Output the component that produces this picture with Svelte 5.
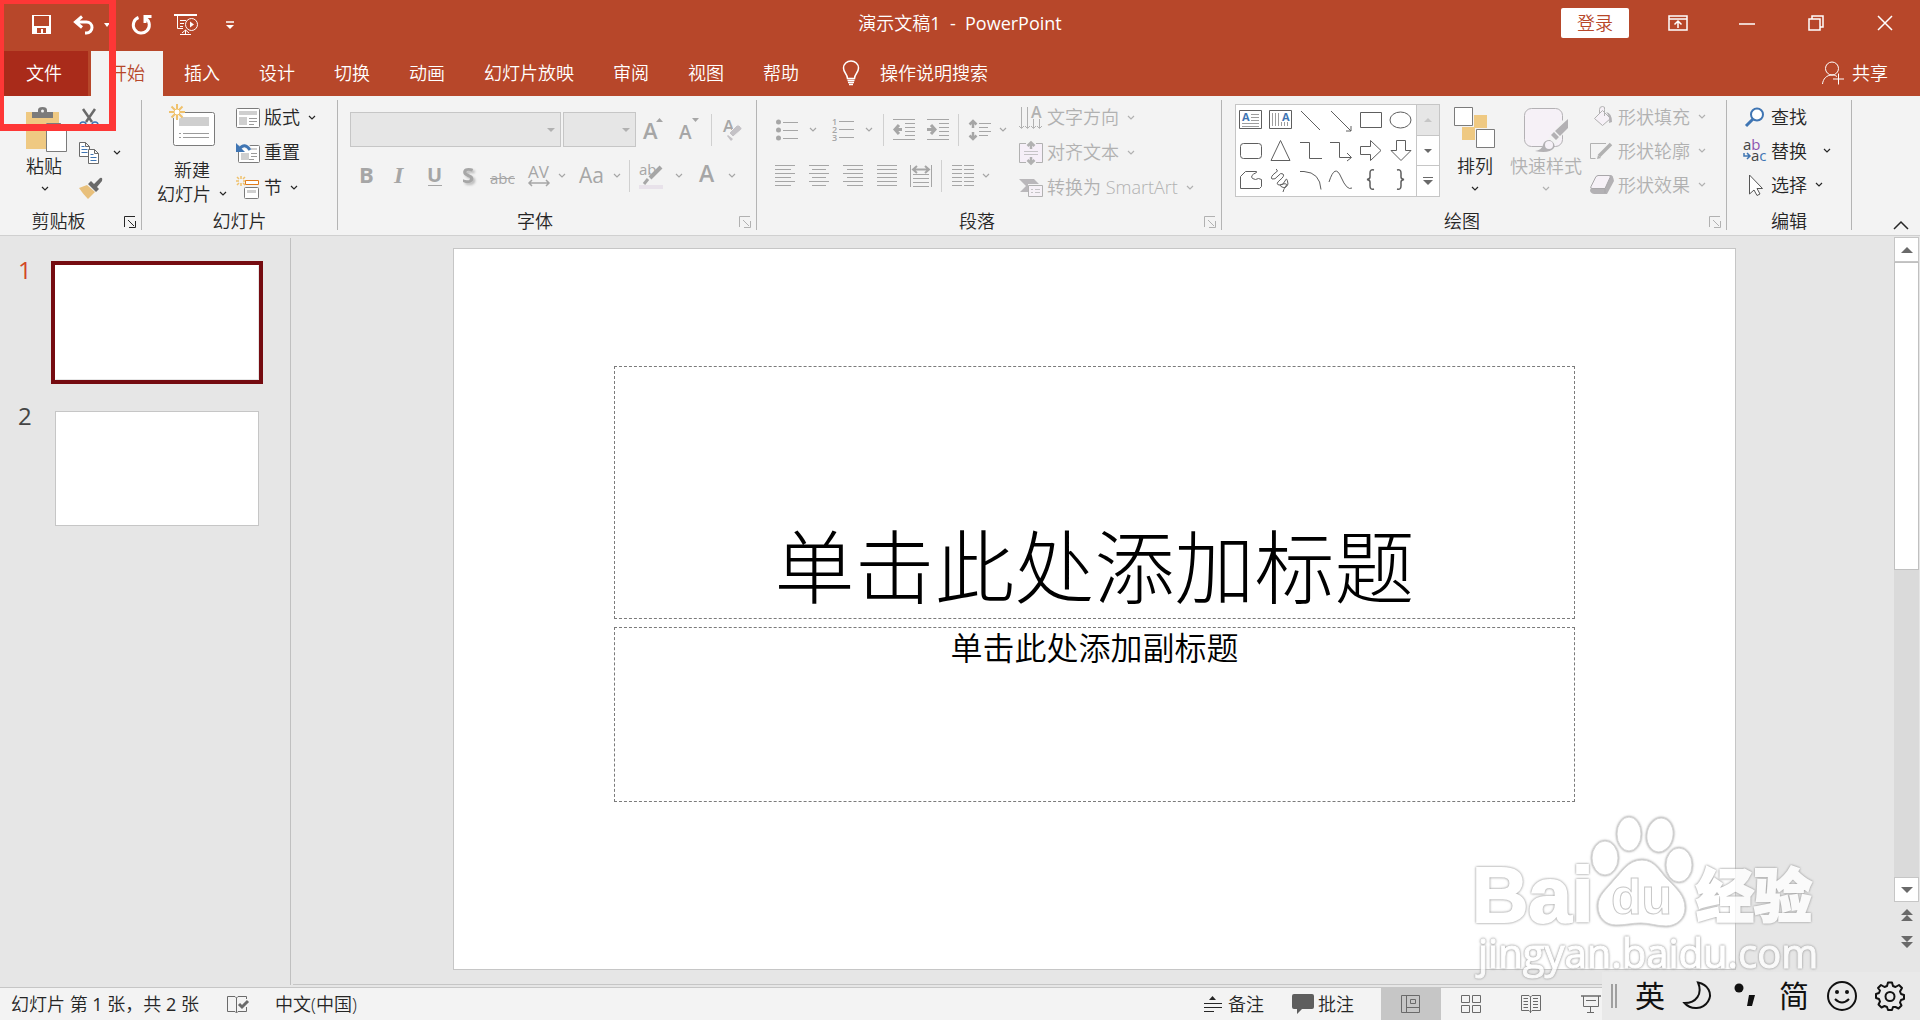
<script>
	const tabs = ['插入', '设计', '切换', '动画', '幻灯片放映', '审阅', '视图', '帮助'];

	// name: [width, height, markup]
	const icons = {
		save: [19, 19, '<path fill="currentColor" stroke="none" fill-rule="evenodd" d="M0 0h19v19H0zM2 1h15v10H2zM5 13h9v5h-3v-4H9v4H5z"/>'],
		undo: [22, 20, '<path stroke-width="3" d="M9 1.5L2.5 7 9 12.5M3 7h10.5a5.5 5.5 0 0 1 0 11H12"/>'],
		redo: [20, 21, '<path stroke-width="3" d="M6.5 3.5A8 8 0 1 0 14 4.5M19.5 2.5H13V9"/>'],
		show: [24, 21, '<path stroke-width="2" d="M0 1h23"/><path d="M3.5 2v12.5H9M6 6.5h6M6 9.5h4M6 12.5h3M6 20.5h11M11.5 16v4M8 19l3.5-3 3.5 3"/><circle cx="17.5" cy="10.5" r="6"/><path fill="currentColor" stroke="none" d="M16 7.5l4 3-4 3z"/>'],
		more: [8, 8, '<path stroke-width="1.5" d="M0 1h8"/><path fill="currentColor" stroke="none" d="M0 4h8L4 8z"/>'],
		caret: [6, 4, '<path fill="currentColor" stroke="none" d="M0 0h6L3 4z"/>'],
		bulb: [18, 26, '<path stroke-width="1.5" d="M5.5 18.5C5.5 14 1.5 13 1.5 8a7.5 7 0 0 1 15 0c0 5-4 6-4 10.5zM5.5 20.5h7M6 22.5h6M7 24.5h4"/>'],
		ribbonMode: [20, 16, '<path stroke-width="1.5" d="M1 1h18v14H1zM1 4h18M10 13V6M6.5 9.5L10 6l3.5 3.5"/>'],
		minimize: [16, 16, '<path stroke-width="1.5" d="M0 9h16"/>'],
		restore: [16, 16, '<path stroke-width="1.5" d="M1 4h11v11H1zM4 4V1h11v11h-3"/>'],
		close: [16, 16, '<path stroke-width="1.5" d="M1 1l14 14M15 1L1 15"/>'],
		share: [22, 24, '<circle cx="10" cy="7.5" r="6.5"/><path d="M.5 23c.5-5 4-9 9.5-9 2 0 3.5.5 5 1.5M16.5 12.5v11M11 18h11"/>'],
		chevron: [8, 6, '<path stroke-width="1.2" d="M1 1l3 3 3-3"/>'],
		launcher: [12, 12, '<path d="M.5 11V.5H11M4 4l6 6M11.5 5v6.5H5"/>'],
		paste: [42, 46, '<path fill="#efc982" stroke="none" d="M0 5h33v11H20v26H0z"/><path fill="#7b7b7b" stroke="none" d="M6 5h6V3q0-3 4.5-3T21 3v2h6v6H6z"/><circle cx="16.5" cy="4" r="1.5" fill="#f3f3f3" stroke="none"/><path fill="#fff" stroke="#7b7b7b" d="M20.5 16.5h14l6 6v22h-20zM34.5 16.5v6h6"/>'],
		cut: [20, 20, '<path stroke="#6a6a6a" stroke-width="2.5" d="M4 1l9 13M16 1L7 14"/><circle cx="4" cy="17" r="3" stroke="#3f75b3" stroke-width="1.5"/><circle cx="16" cy="17" r="3" stroke="#3f75b3" stroke-width="1.5"/>'],
		copy: [20, 22, '<path fill="#fff" stroke="#6a6a6a" d="M.5.5h6l4 4v10H.5zM6.5.5v4h4"/><path stroke="#3f75b3" d="M2.5 4.5h3M2.5 7.5h6M2.5 10.5h6"/><path fill="#fff" stroke="#6a6a6a" d="M9.5 7.5h6l4 4v10h-10zM15.5 7.5v4h4"/><path stroke="#3f75b3" d="M11.5 12.5h3M11.5 15.5h6M11.5 18.5h6"/>'],
		brush: [24, 22, '<path fill="#e8c07c" stroke="none" d="M0 11l8-3 8 7-7 7q-5-5-9-11z"/><path fill="#6a6a6a" stroke="none" d="M9 7l3-3 8 8-3 3zM15 7l6-6q3-1 2 3l-5 6z"/>'],
		newSlide: [47, 42, '<rect x="4.5" y="8.5" width="41" height="33" rx="2" fill="#fff" stroke="#7b7b7b"/><path fill="#cfcfcf" stroke="none" d="M10 13h30v9H10z"/><path stroke="#9b9b9b" d="M10 29.5h2M14 29.5h26M10 33.5h2M14 33.5h26"/><circle cx="8" cy="8" r="7" fill="#f3f3f3" stroke="none"/><path stroke="#efc16c" stroke-width="2" d="M8 0v5M8 11v5M0 8h5M11 8h5M2.5 2.5L6 6M10 10l3.5 3.5M13.5 2.5L10 6M6 10l-3.5 3.5"/><circle cx="8" cy="8" r="3" fill="#fff" stroke="#efc16c"/>'],
		layout: [24, 20, '<rect x=".5" y=".5" width="23" height="19" rx="1" fill="#fff" stroke="#7b7b7b"/><path fill="#cfcfcf" stroke="none" d="M3 3h18v4H3zM3 9h8v8H3z"/><path stroke="#9b9b9b" d="M13 10.5h8M13 13.5h8M13 16.5h5"/>'],
		reset: [24, 20, '<rect x="2.5" y="2.5" width="21" height="17" rx="1" fill="#fff" stroke="#7b7b7b"/><path fill="#cfcfcf" stroke="none" d="M5 10h8v7H5zM15 5h6v2h-6z"/><path stroke="#9b9b9b" d="M15 10.5h6M15 13.5h6M13 16.5h5"/><path stroke="#f3f3f3" stroke-width="5" d="M3 6q5-6 11 0"/><path stroke="#3f75b3" stroke-width="3" d="M3 6q6-7 11 1"/><path fill="#3f75b3" stroke="none" d="M0 0v9h9z"/>'],
		section: [24, 24, '<path stroke="#efc16c" stroke-width="1.5" d="M5 0v3M5 7v3M0 5h3M7 5h3M1 1l2 2M7 7l2 2M9 1L7 3M3 7L1 9"/><path fill="#fff" stroke="#e07c1c" d="M9.5 4.5h13v4h-13z"/><rect x="8.5" y="11.5" width="14" height="11" rx="1" fill="#fff" stroke="#7b7b7b"/><path fill="#cfcfcf" stroke="none" d="M11 14h9v3h-9z"/>'],
		grow: [22, 24, '<text x="0" y="21" font-size="22" font-weight="600">A</text><path fill="currentColor" stroke="none" d="M13 4h7l-3.5-4z"/>'],
		shrink: [22, 24, '<text x="0" y="21" font-size="19" font-weight="600">A</text><path fill="currentColor" stroke="none" d="M13 0h7l-3.5 4z"/>'],
		clear: [20, 24, '<text x="0" y="14" font-size="17" font-weight="600">A</text><path fill="#c4c2c6" stroke="#f3f3f3" d="M6 15l8-8q2-1 4 2 2 2 0 3l-8 7z"/><path fill="#c4c2c6" stroke="none" d="M4 18l1-1 5 4-2 2z"/>'],
		bold: [18, 24, '<text x="1" y="19" font-size="22" font-weight="700">B</text>'],
		italic: [18, 24, '<text x="2" y="19" font-size="24" font-weight="700" font-style="italic" font-family="Liberation Serif">I</text>'],
		underline: [18, 24, '<text x="1" y="18" font-size="20" font-weight="700">U</text><path d="M2 21.5h14"/>'],
		shadow: [18, 24, '<text x="2" y="19" font-size="22" font-weight="700" style="filter:drop-shadow(2px 2px 1px #bbb)">S</text>'],
		strike: [26, 24, '<text x="0" y="20" font-size="15">abc</text><path d="M0 14.5h25"/>'],
		spacing: [22, 24, '<text x="0" y="14" font-size="17">AV</text><path stroke-width="1.5" d="M1 19h20M4 16l-3 3 3 3M18 16l3 3-3 3"/>'],
		letterCase: [26, 24, '<text x="0" y="19" font-size="21">Aa</text>'],
		highlight: [24, 26, '<text x="0" y="12" font-size="15">ab</text><path stroke-width="4" d="M22 4L11 15"/><path stroke-width="3" d="M9 16l-4 5"/><path fill="#e8e2ea" stroke="none" d="M0 22h24v4H0z"/>'],
		fontColor: [18, 26, '<text x="1" y="19" font-size="23" font-weight="600">A</text>'],
		bullets: [22, 22, '<g fill="currentColor" stroke="none"><circle cx="2.5" cy="3" r="2.5"/><circle cx="2.5" cy="11" r="2.5"/><circle cx="2.5" cy="19" r="2.5"/></g><path d="M7 3.5h15M7 11.5h15M7 19.5h15"/>'],
		numbering: [22, 24, '<g font-size="9" font-weight="600"><text x="0" y="7">1</text><text x="0" y="15">2</text><text x="0" y="23">3</text></g><path d="M7 3.5h15M7 11.5h15M7 19.5h15"/>'],
		outdent: [22, 22, '<path d="M0 .5h22M12 4.5h10M12 8.5h10M12 12.5h10M12 16.5h10M0 20.5h22"/><path stroke-width="3" d="M9 10.5H3M6 6l-4 4.5L6 15"/>'],
		indent: [22, 22, '<path d="M0 .5h22M12 4.5h10M12 8.5h10M12 12.5h10M12 16.5h10M0 20.5h22"/><path stroke-width="3" d="M0 10.5h7M4 6l4 4.5L4 15"/>'],
		lineSpacing: [22, 22, '<path d="M10 4.5h12M10 8.5h9M10 12.5h12M10 16.5h9"/><path stroke-width="2.5" d="M4 2v7M4 13v7M.5 5.5L4 2l3.5 3.5M.5 16.5L4 20l3.5-3.5"/>'],
		alignLeft: [20, 22, '<path d="M0 .5h20M0 4.5h16M0 8.5h20M0 12.5h16M0 16.5h20M0 20.5h16"/>'],
		alignCenter: [20, 22, '<path d="M0 .5h20M3 4.5h14M0 8.5h20M3 12.5h14M0 16.5h20M3 20.5h14"/>'],
		alignRight: [20, 22, '<path d="M0 .5h20M4 4.5h16M0 8.5h20M4 12.5h16M0 16.5h20M4 20.5h16"/>'],
		justify: [20, 22, '<path d="M0 .5h20M0 4.5h20M0 8.5h20M0 12.5h20M0 16.5h20M0 20.5h20"/>'],
		distribute: [22, 22, '<path d="M.5 0v22M21.5 0v22M3 9.5h16M3 13.5h16M3 17.5h16M3 21.5h16"/><path stroke-width="2" d="M4 4.5h14M7 1L3 4.5 7 8M15 1l4 3.5L15 8"/>'],
		columns: [22, 22, '<path d="M0 .5h10M12 .5h10M0 4.5h10M12 4.5h10M0 8.5h10M12 8.5h10M0 12.5h10M12 12.5h10M0 16.5h10M12 16.5h10M0 20.5h10M12 20.5h10"/>'],
		direction: [24, 24, '<text x="12" y="12" font-size="16" font-weight="600">A</text><path d="M2.5 1v21M8.5 1v21M14.5 13v9M20.5 13v9M0 20l2.5 2.5L5 20M6 20l2.5 2.5L11 20M12 20l2.5 2.5L17 20M18 20l2.5 2.5L23 20"/>'],
		alignText: [24, 24, '<path fill="#f6eff8" stroke="none" d="M1 3h22v18H1z"/><path d="M7 2.5H.5v19H7M17 2.5h6.5v19H17"/><path stroke-width="2.5" d="M12 8V2M8.5 5L12 1.5 15.5 5M12 16v6M8.5 19l3.5 3.5 3.5-3.5"/><path d="M5 10.5h14M5 13.5h14" stroke-opacity=".7"/>'],
		smartArt: [24, 20, '<path fill="#b9b7ba" stroke="none" d="M0 1h15l5 5H9v8H1l6-6z"/><path fill="#f6f1f7" d="M9.5 7.5h14v11h-14z"/><path d="M12 11.5h2M16 11.5h5M12 14.5h2M16 14.5h5" stroke-opacity=".7"/>'],
		arrange: [42, 46, '<path fill="#efc982" stroke="none" d="M20 8h13v13H20zM8 20h13v13H8z"/><path fill="#fff" stroke="#7b7b7b" d="M.5.5h18v18H.5zM22.5 22.5h18v18h-18z"/>'],
		quick: [44, 46, '<rect x=".5" y="1.5" width="38" height="38" rx="7" fill="#f6f1f7" stroke="#b3b1b4"/><path stroke="#f3f3f3" stroke-width="9" d="M43 15L22 42"/><path fill="#b3b1b4" stroke="none" d="M44 12v9l-8 8-5-5zM30 25l5 5-3 3-5-5zM11 44q7-1 8-6t7-5q6 3 4 8-5 6-19 3z"/><circle cx="25" cy="38" r="4" fill="#f6f1f7" stroke="none"/>'],
		fill: [24, 22, '<path fill="#f6f1f7" d="M4.5 12.5l8-8 8 8-8 7zM9.5 7V3.5q0-3 3-3t2 3V10"/><path fill="#b3b1b4" stroke="none" d="M16 6q6 1 6 10l-3 1q1-7-3-11z"/>'],
		outline: [24, 18, '<path d="M16 1.5H.5v15h5"/><path stroke-width="3.5" d="M21 2L9 14"/><path fill="currentColor" stroke="none" d="M7 17l1-4 3 3z"/>'],
		effect: [24, 22, '<path fill="#b3b1b4" stroke="none" d="M8 1h13q2 0 3 6l-7 13H4q-4-1-4-4z"/><path fill="#f6f1f7" stroke="#a9a7aa" d="M8 1.5h11q2 0 1 2l-5 11H2q-2 0-1-2l5-10zM15 15v4"/>'],
		find: [22, 20, '<circle cx="13" cy="7.5" r="6" fill="#fff" stroke="#3f75b3" stroke-width="2"/><path stroke="#3f75b3" stroke-width="3" d="M9 12l-7 7"/>'],
		replace: [24, 24, '<g font-size="15"><text x="0" y="11" style="fill:#444">a<tspan fill="#8d55b0">b</tspan></text><text x="8" y="22" style="fill:#444">a<tspan fill="#3f75b3">c</tspan></text></g><path stroke="#3f75b3" stroke-width="1.5" d="M1 14v3h5M4 14l3 3-3 3"/>'],
		select: [22, 22, '<path fill="#fff" stroke="#555" d="M5.5 1v19l4.5-4 3 5.5 3-1.5-3-5.5h5.5z"/>'],
		collapse: [16, 9, '<path stroke-width="1.5" d="M1 8l7-7 7 7"/>'],
		prev: [12, 13, '<path fill="currentColor" stroke="none" d="M6 0l6 6H0zM6 6l6 6H0z"/>'],
		next: [12, 13, '<path fill="currentColor" stroke="none" d="M0 0h12L6 6zM0 6h12l-6 6z"/>'],
		up: [12, 6, '<path fill="currentColor" stroke="none" d="M6 0l6 6H0z"/>'],
		down: [12, 6, '<path fill="currentColor" stroke="none" d="M0 0h12L6 6z"/>'],
		smallUp: [8, 4, '<path fill="currentColor" stroke="none" d="M4 0l4 4H0z"/>'],
		smallDown: [8, 4, '<path fill="currentColor" stroke="none" d="M0 0h8L4 4z"/>'],
		expand: [10, 8, '<path d="M0 .5h10"/><path fill="currentColor" stroke="none" d="M0 3h10L5 8z"/>'],
		proof: [22, 19, '<path d="M9.5 17.5V3L8 1.5H.5v15H8l1.5 1.5L11 16.5h8.5V12M9.5 3L11 1.5h8.5V4"/><path stroke-width="3" d="M12 9l3 3 6-6"/>'],
		notes: [18, 18, '<path fill="currentColor" stroke="none" d="M5 5h7L8.5 1z"/><path d="M0 8.5h18M0 12.5h18M0 16.5h10"/>'],
		comment: [22, 20, '<path fill="#5e5e5e" stroke="none" d="M2 0h18q2 0 2 2v11q0 2-2 2H10l-5 5v-5H2q-2 0-2-2V2q0-2 2-2z"/>'],
		normal: [20, 18, '<path d="M.5.5h18v17H.5zM5.5.5v17M5.5 12.5h13M9.5 4.5h5v4h-5z"/>'],
		sorter: [20, 18, '<path d="M.5.5h8v7h-8zM11.5.5h8v7h-8zM.5 10.5h8v7h-8zM11.5 10.5h8v7h-8z"/>'],
		reading: [20, 18, '<path d="M8 .5H.5v15H8l1.5 1.5 1.5-1.5h8.5V.5H11L9.5 2zM9.5 2v16M2.5 3.5H7M2.5 6.5H7M2.5 9.5H7M2.5 12.5H7M12 3.5h5M12 6.5h5M12 9.5h5M12 12.5h5"/>'],
		slideshow: [20, 18, '<path stroke-width="1.5" d="M0 1h20"/><path d="M2.5 1v10.5h15V1M5 5.5h10M9.5 12v6M6 17.5h7"/>'],
		moon: [30, 30, '<path stroke-width="2" d="M15 1.5c10 2 15 11 10 19-5 8-17 9-23.5 1.5C13 22 20 13 15 1.5z"/>'],
		punct: [24, 30, '<circle cx="5" cy="7" r="4.5" fill="currentColor" stroke="none"/><path fill="currentColor" stroke="none" d="M15 14h6l-3 11h-5z"/>'],
		smile: [30, 30, '<circle cx="15" cy="15" r="14" stroke-width="2"/><path stroke-width="2" d="M8 18q7 7 14 0"/><circle cx="10" cy="11" r="2" fill="currentColor" stroke="none"/><circle cx="20" cy="11" r="2" fill="currentColor" stroke="none"/>'],
		gear: [30, 30, '<path stroke-width="2" stroke-linejoin="round" d="M12 5l1-3.5h4L18 5l2.5 1 3.5-2 3 3-2 3.5 1 2.5 3 1v4l-3 1-1 2.5 1.5 3-3 3-3-1.5L18 26l-1 3h-4l-1-3-2.5-1-3 1.5-3-3 1.5-3L4 18l-3-1v-4l3-1 1-2.5L3 7l3-3 3.5 2z"/><circle cx="15" cy="15.5" r="4.5" stroke-width="2"/>']
	};

	// cells of the shape gallery, row by row
	const shapes = [
		['文本框', '<path d="M.5 1.5h22v18H.5z"/><path stroke-opacity=".6" d="M12 5.5h8M12 8.5h8M12 11.5h8M3 14.5h17M3 17.5h17"/><text x="3" y="12" font-size="11" font-weight="700" style="fill:#3f75b3">A</text>'],
		['竖排文本框', '<path d="M.5 1.5h22v18H.5z"/><path stroke-opacity=".6" d="M3.5 4v13M6.5 4v13M9.5 4v13M12.5 13v4M15.5 13v4M18.5 13v4"/><text x="13" y="12" font-size="11" font-weight="700" style="fill:#3f75b3">A</text>'],
		['直线', '<path d="M2 2l19 19"/>'],
		['箭头', '<path d="M2 2l20 20M22 17v5h-5"/>'],
		['矩形', '<path d="M1.5 3.5h21v15h-21z"/>'],
		['椭圆', '<ellipse cx="11.5" cy="11" rx="10.5" ry="8"/>'],
		['圆角矩形', '<rect x="1.5" y="4.5" width="21" height="15" rx="3"/>'],
		['三角形', '<path d="M11.5 1.5L21 21.5H2z"/>'],
		['肘形连接符', '<path d="M1 3.5h9.5v16H23"/>'],
		['肘形箭头', '<path d="M1 3.5h9.5v15H22M18 14l4.5 4.5L18 22"/>'],
		['右箭头', '<path d="M1.5 7.5h10v-6L22 11.5l-10.5 10v-6h-10z"/>'],
		['下箭头', '<path d="M7.5 1.5h9v10H22l-10 10-10-10h5.5z"/>'],
		['任意多边形', '<path d="M1.5 19.5v-12l5-5h11v1q-7 3-4 6 3 2 6 0l3 1v7l-2 2z"/>'],
		['自由曲线', '<path d="M7 0q3 2-1 4-5 4-3 6 3 1 6-3t5-2-3 6-1 5 6-4 3 3q-2 5-6 3t1-3 3 2-2 3-1 3"/>'],
		['弧形', '<path d="M1 2.5h4q16 1 17 18"/>'],
		['曲线', '<path d="M0 13Q6-6 12 8t11 11"/>'],
		['左大括号', '<path stroke-width="1.5" d="M15 1q-4-1-4 3v4q0 2-3 2.5 3 .5 3 2.5v4q0 4 4 3"/>'],
		['右大括号', '<path stroke-width="1.5" d="M8 1q4-1 4 3v4q0 2 3 2.5-3 .5-3 2.5v4q0 4-4 3"/>']
	];

	let selected = $state(1);
</script>

{#snippet icon(name)}
	<svg
		width={icons[name][0]}
		height={icons[name][1]}
		viewBox="0 0 {icons[name][0]} {icons[name][1]}"
		fill="none"
		stroke="currentColor"
		aria-hidden="true">{@html icons[name][2]}</svg
	>
{/snippet}

{#snippet tool(name, label, drop = false)}
	<button class="tool" class:drop aria-label={label} disabled>
		{@render icon(name)}
		{#if drop}{@render icon('chevron')}{/if}
	</button>
{/snippet}

{#snippet row(name, label, drop = false, disabled = false)}
	<button class="row" {disabled}>
		<span class="row-icon">{@render icon(name)}</span>
		<span class="row-label">{label}</span>
		{#if drop}{@render icon('chevron')}{/if}
	</button>
{/snippet}

{#snippet footer(label, launcher = true, disabled = true)}
	<div class="group-footer">
		<span>{label}</span>
		{#if launcher}
			<button class="launcher" aria-label="{label}设置" {disabled}>{@render icon('launcher')}</button>
		{/if}
	</div>
{/snippet}

<div class="app">
	<header>
		<div class="titlebar">
			<div class="quick-access">
				<button aria-label="保存">{@render icon('save')}</button>
				<button aria-label="撤消">{@render icon('undo')}</button>
				<button class="undo-more" aria-label="撤消列表">{@render icon('caret')}</button>
				<button aria-label="重复">{@render icon('redo')}</button>
				<button aria-label="从头开始">{@render icon('show')}</button>
				<button class="customize" aria-label="自定义快速访问工具栏">{@render icon('more')}</button>
			</div>
			<div class="doc-title">演示文稿<span class="latin">1&nbsp; -&nbsp; PowerPoint</span></div>
			<div class="window-buttons">
				<button class="login">登录</button>
				<button class="win" aria-label="功能区显示选项">{@render icon('ribbonMode')}</button>
				<button class="win" aria-label="最小化">{@render icon('minimize')}</button>
				<button class="win" aria-label="还原">{@render icon('restore')}</button>
				<button class="win" aria-label="关闭">{@render icon('close')}</button>
			</div>
		</div>
		<nav class="tabs">
			<button class="file">文件</button>
			<button class="active">开始</button>
			{#each tabs as tab}
				<button>{tab}</button>
			{/each}
			<label class="tell-me">
				{@render icon('bulb')}
				<input type="text" placeholder="操作说明搜索" aria-label="操作说明搜索" />
			</label>
			<button class="share">{@render icon('share')}共享</button>
		</nav>
	</header>

	<div class="ribbon">
		<section class="group clipboard">
			<div class="group-body">
				<button class="big paste">
					{@render icon('paste')}
					<span>粘贴</span>
					{@render icon('chevron')}
				</button>
				<div class="stack icons-only">
					<button aria-label="剪切">{@render icon('cut')}</button>
					<button class="copy" aria-label="复制">{@render icon('copy')}{@render icon('chevron')}</button>
					<button aria-label="格式刷">{@render icon('brush')}</button>
				</div>
			</div>
			{@render footer('剪贴板', true, false)}
		</section>

		<section class="group slides">
			<div class="group-body">
				<button class="big new-slide">
					{@render icon('newSlide')}
					<span>新建</span>
					<span class="with-chevron">幻灯片{@render icon('chevron')}</span>
				</button>
				<div class="stack">
					{@render row('layout', '版式', true)}
					{@render row('reset', '重置')}
					{@render row('section', '节', true)}
				</div>
			</div>
			{@render footer('幻灯片', false)}
		</section>

		<section class="group font">
			<div class="group-body lines">
				<div class="line">
					<label class="combo family">
						<select aria-label="字体" disabled></select>
						{@render icon('smallDown')}
					</label>
					<label class="combo size">
						<select aria-label="字号" disabled></select>
						{@render icon('smallDown')}
					</label>
					{@render tool('grow', '增大字号')}
					{@render tool('shrink', '减小字号')}
					<span class="sep"></span>
					{@render tool('clear', '清除所有格式')}
				</div>
				<div class="line">
					{@render tool('bold', '加粗')}
					{@render tool('italic', '倾斜')}
					{@render tool('underline', '下划线')}
					{@render tool('shadow', '文字阴影')}
					{@render tool('strike', '删除线')}
					{@render tool('spacing', '字符间距', true)}
					{@render tool('letterCase', '更改大小写', true)}
					<span class="sep"></span>
					{@render tool('highlight', '文本突出显示颜色', true)}
					{@render tool('fontColor', '字体颜色', true)}
				</div>
			</div>
			{@render footer('字体')}
		</section>

		<section class="group paragraph">
			<div class="group-body">
				<div class="lines">
					<div class="line">
						{@render tool('bullets', '项目符号', true)}
						{@render tool('numbering', '编号', true)}
						<span class="sep"></span>
						{@render tool('outdent', '降低列表级别')}
						{@render tool('indent', '提高列表级别')}
						<span class="sep"></span>
						{@render tool('lineSpacing', '行距', true)}
					</div>
					<div class="line">
						{@render tool('alignLeft', '左对齐')}
						{@render tool('alignCenter', '居中')}
						{@render tool('alignRight', '右对齐')}
						{@render tool('justify', '两端对齐')}
						{@render tool('distribute', '分散对齐')}
						<span class="sep"></span>
						{@render tool('columns', '分栏', true)}
					</div>
				</div>
				<div class="stack">
					{@render row('direction', '文字方向', true, true)}
					{@render row('alignText', '对齐文本', true, true)}
					{@render row('smartArt', '转换为 SmartArt', true, true)}
				</div>
			</div>
			{@render footer('段落')}
		</section>

		<section class="group drawing">
			<div class="group-body">
				<div class="gallery">
					<div class="shapes">
						{#each shapes as [name, markup]}
							<button aria-label={name}>
								<svg width="24" height="23" viewBox="0 0 24 23" fill="none" stroke="currentColor" aria-hidden="true">{@html markup}</svg>
							</button>
						{/each}
					</div>
					<div class="gallery-nav">
						<button aria-label="向上" disabled>{@render icon('smallUp')}</button>
						<button aria-label="向下">{@render icon('smallDown')}</button>
						<button aria-label="其他">{@render icon('expand')}</button>
					</div>
				</div>
				<button class="big">
					{@render icon('arrange')}
					<span>排列</span>
					{@render icon('chevron')}
				</button>
				<button class="big" disabled>
					{@render icon('quick')}
					<span>快速样式</span>
					{@render icon('chevron')}
				</button>
				<div class="stack tight">
					{@render row('fill', '形状填充', true, true)}
					{@render row('outline', '形状轮廓', true, true)}
					{@render row('effect', '形状效果', true, true)}
				</div>
			</div>
			{@render footer('绘图')}
		</section>

		<section class="group editing">
			<div class="group-body">
				<div class="stack tight">
					{@render row('find', '查找')}
					{@render row('replace', '替换', true)}
					{@render row('select', '选择', true)}
				</div>
			</div>
			{@render footer('编辑', false)}
		</section>

		<button class="collapse" aria-label="折叠功能区">{@render icon('collapse')}</button>
	</div>

	<main>
		<aside class="thumbs">
			{#each [1, 2] as n}
				<button class="thumb" class:selected={selected === n} onclick={() => (selected = n)}>
					<span class="number">{n}</span>
					<span class="frame"><span class="page"></span></span>
				</button>
			{/each}
		</aside>
		<div class="editor">
			<div class="slide">
				<h1>单击此处添加标题</h1>
				<p>单击此处添加副标题</p>
			</div>
		</div>
		<div class="scrollbar">
			<button class="step" aria-label="向上滚动">{@render icon('up')}</button>
			<div class="track"><div class="grip"></div></div>
			<button class="step" aria-label="向下滚动">{@render icon('down')}</button>
			<button class="jump" aria-label="上一张幻灯片">{@render icon('prev')}</button>
			<button class="jump" aria-label="下一张幻灯片">{@render icon('next')}</button>
		</div>
	</main>

	<footer class="status">
		<span>幻灯片 第 <span class="latin">1</span> 张，共 <span class="latin">2</span> 张</span>
		<button class="proof" aria-label="拼写检查">{@render icon('proof')}</button>
		<button class="lang">中文(中国)</button>
		<div class="status-right">
			<button class="note">{@render icon('notes')}备注</button>
			<button class="note comments">{@render icon('comment')}批注</button>
			<button class="view on" aria-label="普通视图">{@render icon('normal')}</button>
			<button class="view" aria-label="幻灯片浏览">{@render icon('sorter')}</button>
			<button class="view" aria-label="阅读视图">{@render icon('reading')}</button>
			<button class="view" aria-label="幻灯片放映">{@render icon('slideshow')}</button>
		</div>
	</footer>

	<svg class="watermark" width="360" height="172" viewBox="0 0 360 172" aria-hidden="true">
		<g class="brand">
			<text class="solid" x="7" y="112" font-size="78" font-weight="700">Bai</text>
			<ellipse cx="140" cy="48" rx="13" ry="17" />
			<ellipse cx="164" cy="24" rx="12" ry="17" />
			<ellipse cx="195" cy="25" rx="13" ry="17" transform="rotate(10 195 25)" />
			<ellipse cx="214" cy="55" rx="13" ry="17" />
			<path
				d="M177 50c13 0 18 12 26 20 9 9 17 16 17 28 0 11-9 18-19 18s-16-3-25-3-15 2-25 2c-10 0-18-7-18-19 0-11 9-17 16-26 8-8 14-20 28-20z"
			/>
			<text x="146" y="104" font-size="50" font-weight="700">du</text>
			<text class="solid cn" x="231" y="107" font-size="58" font-weight="900">经验</text>
			<text class="url" x="13" y="158" font-size="40">jingyan.baidu.com</text>
		</g>
	</svg>

	<div class="ime">
		<span class="ime-grip"></span>
		<button>英</button>
		<button aria-label="半角">{@render icon('moon')}</button>
		<button aria-label="中文标点">{@render icon('punct')}</button>
		<button>简</button>
		<button aria-label="表情">{@render icon('smile')}</button>
		<button aria-label="设置">{@render icon('gear')}</button>
	</div>

	<div class="marker"></div>
</div>

<style>
	:global(body) {
		margin: 0;
	}

	.app {
		position: relative;
		display: flex;
		flex-direction: column;
		height: 100vh;
		overflow: hidden;
		background: #e6e6e6;
		color: #262626;
		font-family: 'Open Sans', 'Noto Sans CJK SC', sans-serif;
		font-size: 18px;
		font-weight: 350;
		line-height: 24px;
	}

	button {
		display: flex;
		align-items: center;
		justify-content: center;
		margin: 0;
		padding: 0;
		border: 0;
		background: none;
		color: inherit;
		font: inherit;
		white-space: nowrap;
	}

	button:disabled {
		color: #b1b1b1;
	}

	svg {
		flex: none;
		overflow: visible;
		font-weight: 400;
	}

	svg :global(text) {
		fill: currentColor;
		stroke: none;
	}

	.latin {
		font-weight: 400;
	}

	/* title bar and tabs */
	header {
		background: #b7472a;
		color: #fff;
	}

	.titlebar {
		display: grid;
		grid-template-columns: 1fr auto 1fr;
		height: 51px;
	}

	.quick-access {
		display: flex;
		align-items: center;
		padding: 0 0 2px 32px;
	}

	.quick-access button + button {
		margin-left: 22px;
	}

	.quick-access .undo-more {
		margin-left: 9px;
	}

	.quick-access .customize {
		margin-left: 28px;
	}

	.doc-title {
		align-self: center;
		padding-bottom: 6px;
	}

	.window-buttons {
		display: flex;
		justify-content: flex-end;
		padding-right: 1px;
	}

	.login {
		align-self: flex-start;
		width: 68px;
		height: 30px;
		margin: 8px 14px 0 0;
		border-radius: 2px;
		background: #fff;
		color: #b7472a;
	}

	.win {
		width: 69px;
		height: 46px;
	}

	.tabs {
		display: flex;
		gap: 3px;
		height: 45px;
	}

	.tabs button {
		padding: 0 18px 2px;
	}

	.tabs .file {
		width: 88px;
		background: #a92b1a;
	}

	.tabs .active {
		background: #f3f3f3;
		color: #b7472a;
	}

	.tell-me {
		display: flex;
		align-items: center;
		gap: 20px;
		margin-left: 22px;
		padding-bottom: 2px;
	}

	.tell-me input {
		width: 180px;
		padding: 0;
		border: 0;
		background: none;
		color: #fff;
		font: inherit;
	}

	.tell-me input::placeholder {
		color: #fff;
		opacity: 1;
	}

	.tabs .share {
		gap: 8px;
		margin-left: auto;
		padding: 0 32px 2px;
	}

	/* ribbon */
	.ribbon {
		display: flex;
		height: 139px;
		border-bottom: 1px solid #d0d0d0;
		background: #f3f3f3;
	}

	.group {
		display: flex;
		flex: none;
		flex-direction: column;
		box-sizing: border-box;
		padding-top: 4px;
		border-right: 1px solid #b4b4b4;
		border-image: linear-gradient(transparent 5px, #b4b4b4 5px, #b4b4b4 133px, transparent 133px) 1;
	}

	.group-body {
		display: flex;
		height: 108px;
	}

	.group-footer {
		display: flex;
		align-items: center;
		height: 26px;
		padding-bottom: 1px;
	}

	.group-footer span {
		flex: 1;
		text-align: center;
	}

	.launcher {
		width: 24px;
		height: 24px;
		padding: 2px 0 0 2px;
	}

	.big {
		flex-direction: column;
		justify-content: flex-start;
		padding-top: 7px;
	}

	.big span {
		margin: 1px 0 8px;
	}

	.clipboard {
		width: 142px;
	}

	.paste {
		align-items: flex-start;
		margin-left: 26px;
	}

	.paste > :global(svg:last-child) {
		margin-left: 15px;
	}

	.stack {
		display: flex;
		flex-direction: column;
	}

	.stack button {
		height: 35px;
		justify-content: flex-start;
	}

	.stack.tight button {
		height: 34px;
	}

	.icons-only {
		margin-left: 11px;
	}

	.stack .copy {
		gap: 14px;
	}

	.row {
		gap: 4px;
	}

	.row-icon {
		display: flex;
		justify-content: center;
		width: 24px;
	}

	.row-label {
		padding-bottom: 1px;
	}

	.row > :global(svg) {
		margin-left: 4px;
	}

	.slides {
		width: 196px;
	}

	.new-slide {
		width: 78px;
		margin: 0 5px 0 11px;
		padding-top: 4px;
	}

	.new-slide span {
		margin: 0;
	}

	.new-slide span:nth-of-type(1) {
		padding-top: 12px;
	}

	.new-slide .with-chevron {
		display: flex;
		align-items: center;
		gap: 8px;
	}

	.font {
		width: 419px;
	}

	.lines {
		display: flex;
		flex-direction: column;
		gap: 11px;
		box-sizing: border-box;
		padding: 12px 0 0 12px;
	}

	.line {
		display: flex;
		align-items: center;
		height: 35px;
	}

	.sep {
		width: 1px;
		height: 32px;
		margin: 0 3px;
		background: #d0d0d0;
	}

	.combo {
		display: grid;
		align-items: center;
		height: 35px;
		color: #b1b1b1;
	}

	.combo select {
		grid-area: 1 / 1;
		width: 100%;
		height: 35px;
		border: 1px solid #c6c6c6;
		border-radius: 0;
		background: #e6e6e6;
		appearance: none;
		opacity: 1;
	}

	.combo :global(svg) {
		grid-area: 1 / 1;
		justify-self: end;
		margin-right: 6px;
	}

	.combo.family {
		width: 211px;
		margin-right: 2px;
	}

	.combo.size {
		width: 73px;
	}

	.tool {
		width: 34px;
		height: 34px;
	}

	.combo ~ .tool {
		width: 36px;
	}

	.tool.drop {
		gap: 8px;
		width: 53px;
	}

	.font .sep ~ .drop {
		gap: 12px;
		width: 56px;
	}

	.tool:disabled {
		color: #a6a6a6;
	}

	.paragraph {
		width: 465px;
	}

	.paragraph .lines {
		width: 262px;
		padding-left: 11px;
	}

	.paragraph .drop {
		width: 56px;
		gap: 11px;
	}

	.paragraph .sep ~ .drop {
		gap: 8px;
		width: 52px;
	}

	.drawing {
		width: 505px;
	}

	.gallery {
		display: flex;
		height: 91px;
		margin: 4px 0 0 13px;
		border: 1px solid #c6c6c6;
		background: #fff;
	}

	.shapes {
		display: grid;
		grid-template-columns: repeat(6, 30px);
		grid-template-rows: repeat(3, 30px);
		color: #5e5e5e;
	}

	.gallery-nav {
		display: flex;
		flex-direction: column;
		width: 22px;
		border-left: 1px solid #c6c6c6;
	}

	.gallery-nav button {
		flex: 1;
		color: #6a6a6a;
	}

	.gallery-nav button + button {
		border-top: 1px solid #c6c6c6;
	}

	.gallery-nav button:disabled {
		background: #e6e6e6;
		color: #c6c6c6;
	}

	.drawing .big {
		width: 72px;
		margin: 0 0 0 -1px;
	}

	.drawing .stack {
		margin-left: 8px;
	}

	.editing {
		width: 125px;
	}

	.editing .stack {
		margin-left: 16px;
	}

	.editing .row:nth-child(2) > :global(svg) {
		margin-left: 12px;
	}

	.collapse {
		align-self: flex-end;
		width: 38px;
		height: 20px;
		margin-left: auto;
	}

	/* work area */
	main {
		display: flex;
		flex: 1;
		min-height: 0;
	}

	.thumbs {
		display: flex;
		flex-direction: column;
		gap: 23px;
		box-sizing: border-box;
		width: 291px;
		margin: 2px 0;
		padding-top: 23px;
		border-right: 1px solid #c0c0c0;
	}

	.thumb {
		align-items: flex-start;
		justify-content: flex-start;
	}

	.number {
		width: 33px;
		padding-left: 18px;
		margin-top: -3px;
		font-size: 24px;
		font-weight: 400;
		text-align: left;
		color: #444;
	}

	.frame {
		border: 4px solid transparent;
	}

	.page {
		display: block;
		box-sizing: border-box;
		width: 204px;
		height: 115px;
		border: 1px solid #c6c6c6;
		background: #fff;
	}

	.selected .number {
		color: #d24726;
	}

	.selected .frame {
		border-color: #750b10;
	}

	.selected .page {
		border-color: #fff #e6e6e6 #e6e6e6 #fff;
	}

	.editor {
		display: flex;
		flex: 1;
		align-items: flex-start;
		justify-content: center;
		margin: 0 0 2px 2px;
		padding: 12px 0 14px 2px;
		border-bottom: 1px solid #c6c6c6;
	}

	.slide {
		display: grid;
		grid-template: 117fr 253fr 8fr 175fr 167fr / 1fr 6fr 1fr;
		box-sizing: border-box;
		height: 100%;
		aspect-ratio: 16 / 9;
		border: 1px solid #c6c6c6;
		background: #fff;
		color: #000;
		font-family: 'Noto Sans CJK SC', sans-serif;
		text-align: center;
	}

	.slide h1,
	.slide p {
		grid-column: 2;
		margin: 0;
		border: 1px dashed #7b7b7b;
	}

	.slide h1 {
		grid-row: 2;
		display: flex;
		align-items: flex-end;
		justify-content: center;
		padding-bottom: 8px;
		font-size: 80px;
		font-weight: 300;
		line-height: 96px;
	}

	.slide p {
		grid-row: 4;
		font-size: 32px;
		line-height: 36px;
	}

	.scrollbar {
		display: flex;
		flex-direction: column;
		align-items: center;
		width: 25px;
		padding: 1px 1px 28px 0;
		margin-bottom: 2px;
		border-bottom: 1px solid #c6c6c6;
		color: #6a6a6a;
	}

	.step {
		width: 25px;
		height: 25px;
		border: 1px solid #c6c6c6;
		background: #fff;
	}

	.track {
		flex: 1;
		width: 25px;
		background: #dadada;
	}

	.grip {
		box-sizing: border-box;
		height: 50%;
		border: 1px solid #c0c0c0;
		background: #fff;
	}

	.jump {
		width: 25px;
		height: 27px;
	}

	/* status bar */
	.status {
		display: flex;
		align-items: center;
		height: 32px;
		padding-left: 11px;
		border-top: 1px solid #c6c6c6;
		background: #f3f3f3;
	}

	.proof {
		margin: 0 26px 0 28px;
		color: #6a6a6a;
	}

	.status-right {
		display: flex;
		height: 100%;
		margin-left: auto;
		padding-right: 299px;
	}

	.note {
		gap: 6px;
		margin-right: 28px;
	}

	.comments {
		gap: 4px;
		margin-right: 27px;
	}

	.view {
		width: 60px;
		color: #6a6a6a;
	}

	.view.on {
		background: #c6c6c6;
	}

	/* floating layers */
	.watermark {
		position: absolute;
		right: 95px;
		bottom: 38px;
		opacity: 0.8;
		pointer-events: none;
	}

	.brand {
		fill: #fff;
		stroke: #ccc;
		stroke-width: 1;
		font-family: 'Liberation Sans', sans-serif;
		filter: drop-shadow(0 0 1px #888) drop-shadow(0 0 1px #ccc);
	}

	.watermark text {
		fill: #fff;
		stroke: #bbb;
	}

	.watermark .solid {
		stroke: #fff;
		stroke-width: 2;
	}

	.watermark .cn {
		font-family: 'Noto Sans CJK SC', sans-serif;
	}

	.watermark .url {
		stroke: #fff;
		font-family: 'Open Sans', sans-serif;
	}

	.ime {
		position: absolute;
		right: 0;
		bottom: 0;
		display: flex;
		align-items: center;
		box-sizing: border-box;
		height: 48px;
		padding: 0 6px 0 9px;
		background: #e9e9e9;
		color: #111;
		font-size: 30px;
		font-weight: 400;
	}

	.ime-grip {
		width: 2px;
		height: 24px;
		margin-right: 9px;
		border: solid #a0a0a0;
		border-width: 0 2px;
	}

	.ime button {
		width: 48px;
		height: 48px;
	}

	.marker {
		position: absolute;
		top: 0;
		left: 0;
		width: 105px;
		height: 120px;
		border: solid #fe3736;
		border-width: 4px 7px 7px 4px;
		pointer-events: none;
	}
</style>
